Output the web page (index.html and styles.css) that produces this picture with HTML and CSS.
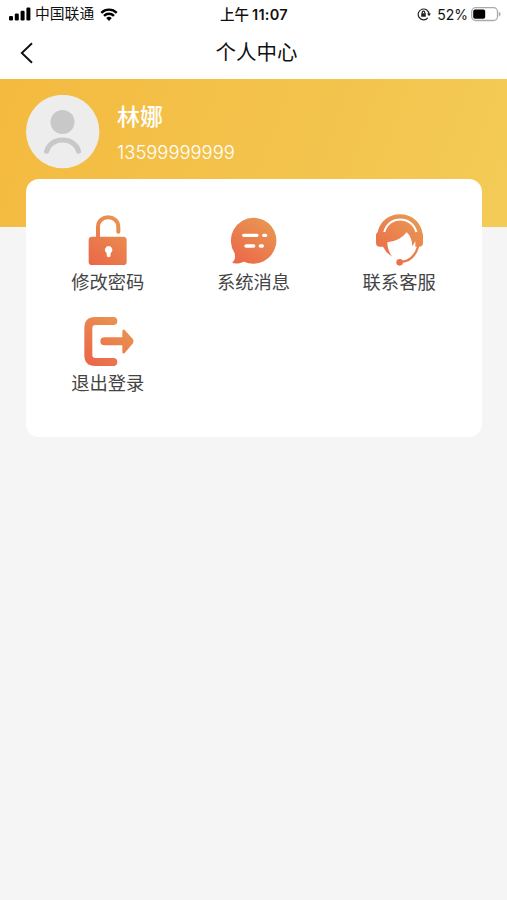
FILE: index.html
```html
<!DOCTYPE html>
<html lang="zh-CN">
<head>
<meta charset="utf-8">
<title>个人中心</title>
<link rel="stylesheet" href="styles.css">
</head>
<body>
<svg class="defs" aria-hidden="true">
  <defs>
    <linearGradient id="warm" gradientUnits="userSpaceOnUse" x1="200" y1="35" x2="90" y2="185">
      <stop offset="0" stop-color="#e99a52"/>
      <stop offset="1" stop-color="#eb6549"/>
    </linearGradient>
  </defs>
</svg>
<div class="status">
  <div class="status-left">
    <svg class="signal" viewBox="0 0 22 14"><rect x="0" y="9" width="4" height="4.5" rx="1.2"/><rect x="5.8" y="6.5" width="4" height="7" rx="1.2"/><rect x="11.6" y="3.8" width="4" height="9.7" rx="1.2"/><rect x="17.4" y="0.5" width="4" height="13" rx="1.2"/></svg>
    <span class="carrier">中国联通</span>
    <svg class="wifi" viewBox="0 0 18 13"><path d="M1.3 4.8a11 11 0 0 1 15.4 0M4 7.8a7.2 7.2 0 0 1 10 0"/><path class="dot" d="M6.2 10a4 4 0 0 1 5.6 0L9 12.9z"/></svg>
  </div>
  <div class="clock"><span class="period">上午</span><span class="time">11:07</span></div>
  <div class="status-right">
    <svg class="lock-rotation" viewBox="0 0 14 14"><path d="M10.8 10.8A5.4 5.4 0 1 1 12 7.4"/><path class="solid" d="M10 6.5h4l-2 2.8zM4.2 6.3h4.6v3.5H4.2z"/><path d="M5.2 6.5V5.4a1.3 1.3 0 0 1 2.6 0v1.1"/></svg>
    <span class="percent">52%</span>
    <svg class="battery" viewBox="0 0 30 15"><rect class="shell" x="0.7" y="0.7" width="25.8" height="12.8" rx="4"/><rect x="2.2" y="2.6" width="12" height="9.2" rx="1.8"/><path class="cap" d="M27.8 4.8c2.4.8 2.4 3.8 0 4.6z"/></svg>
  </div>
</div>
<header class="nav">
  <svg class="back" viewBox="0 0 14 22"><path d="M12 1.2 1.8 11 12 20.8"/></svg>
  <h1 class="title">个人中心</h1>
</header>
<main>
  <section class="banner">
    <svg class="avatar" viewBox="0 0 74 74"><circle class="disc" cx="36.7" cy="36.5" r="36.7"/><circle class="head" cx="36.5" cy="27" r="12"/><path class="shoulders" d="M20.6 56.3C24.5 41.3 48.8 41.3 52.6 56.3"/></svg>
    <div class="identity">
      <div class="name">林娜</div>
      <div class="phone">13599999999</div>
    </div>
  </section>
  <section class="card">
    <a class="item">
      <svg class="icon" viewBox="61 24 162 162"><path class="stroke" stroke-width="12" d="M112 100V66C112 27 173 27 173 66V80"/><rect class="fill" x="84" y="95" width="114" height="85" rx="10"/><path class="hole" d="M144 123a11.5 11.5 0 0 1 6 21v7a6 6 0 0 1-12 0v-7a11.5 11.5 0 0 1 6-21z"/></svg>
      <span class="label">修改密码</span>
    </a>
    <a class="item">
      <svg class="icon" viewBox="64 24 162 162"><path class="fill" d="M147 38a69 69 0 1 1-29 132c-12 5-21 6-31 5-4-1-4-4-1-6 5-5 6-11 4-24A69 69 0 0 1 147 38z"/><path class="line" d="M117 91h40M177 91h6M124 123h23M167 123h6"/></svg>
      <span class="label">系统消息</span>
    </a>
    <a class="item">
      <svg class="icon" viewBox="64 24 162 162"><path class="fill" d="M80 88C90 8 206 8 216 88L200 80H97z"/><path class="fill" d="M99 80H88Q76 80 76 91v22q0 12 12 12h9q8 17 27 30-14-20-14-43 37-3 58-30 16 14 17 42 6-9 9-16v17h11q12 0 12-12V91q0-11-12-11h-10C186 34 112 34 99 80z"/><path class="halo" d="M101 81C113 31 184 31 197 81"/><path class="stroke" stroke-width="7" d="M203 123C195 150 179 169 150 171"/><circle class="fill" cx="147" cy="172" r="10"/></svg>
      <span class="label">联系客服</span>
    </a>
    <a class="item">
      <svg class="icon" viewBox="62 27 162 162"><path class="stroke" stroke-width="24" d="M159 48H105Q84 48 84 69V150Q84 171 105 171H159"/><path class="fill" d="M132 97h54V80q0-9 7-5l25 28q4 6 0 12l-25 29q-7 5-7-5v-18h-54a12 12 0 0 1 0-24z"/></svg>
      <span class="label">退出登录</span>
    </a>
  </section>
</main>
</body>
</html>
```
FILE: styles.css
```css
* { box-sizing: border-box; }
body {
  margin: 0;
  min-height: 900px;
  background: #f5f5f5;
  color: #111;
  font-family: Inter, "Noto Sans CJK SC", sans-serif;
}
svg { display: block; flex: none; }
.defs { position: absolute; width: 0; height: 0; }
.status {
  display: grid;
  grid-template-columns: 1fr auto 1fr;
  align-items: center;
  height: 27px;
  padding: 0 6px 0 7px;
  background: #fff;
  font-size: 14px;
  line-height: 27px;
}
.status-left, .status-right, .clock { display: flex; align-items: center; }
.status-left { padding-left: 2px; }
.status-right { justify-content: flex-end; }
.signal { width: 22px; height: 14px; }
.carrier { margin-left: 4px; padding-top: 1px; font-size: 14.8px; }
.wifi { width: 18px; height: 13px; margin-left: 6px; }
.wifi path { fill: none; stroke: #000; stroke-width: 2.4; }
.wifi .dot { fill: #000; stroke: none; }
.clock { gap: 3px; font-size: 14.5px; font-weight: 600; }
.time { letter-spacing: 0.3px; }
.period { font-weight: 500; }
.lock-rotation { width: 14px; height: 14px; }
.lock-rotation path { fill: none; stroke: #222; stroke-width: 1.2; }
.lock-rotation .solid { fill: #222; stroke: none; }
.percent { margin: 0 3px 0 6px; }
.battery { width: 30px; height: 15px; }
.battery .shell { fill: none; stroke: #aaa; stroke-width: 1.3; }
.battery .cap { fill: #aaa; }
.nav {
  display: grid;
  grid-template-columns: 43px 1fr 37px;
  align-items: center;
  height: 52px;
  background: #fff;
}
.back { width: 14px; height: 22px; margin-left: 20px; }
.back path { fill: none; stroke: #111; stroke-width: 1.9; }
.title {
  margin: 0;
  text-align: center;
  font-size: 20.5px;
  font-weight: 400;
  line-height: 52px;
}
.banner {
  display: flex;
  align-items: flex-start;
  height: 148px;
  padding: 15.5px 25.5px;
  background: linear-gradient(110deg, #f4ba3f, #f3cb56);
  color: #fff;
}
.avatar { width: 74px; height: 74px; }
.disc { fill: #ededed; }
.head { fill: #c8c8c8; }
.shoulders { fill: none; stroke: #c8c8c8; stroke-width: 5; stroke-linecap: round; }
.identity { margin-left: 17.5px; padding-top: 5px; }
.name { font-size: 23px; font-weight: 500; line-height: 34px; }
.phone {
  margin-top: 6px;
  font-size: 18.4px;
  font-weight: 300;
  line-height: 24px;
}
.card {
  display: grid;
  grid-template-columns: repeat(3, 1fr);
  grid-auto-rows: 101px;
  align-content: start;
  height: 258px;
  margin: -48px 25px 0 26px;
  padding: 34px 10px 0 9px;
  background: #fff;
  border-radius: 13px;
}
.item { display: flex; flex-direction: column; align-items: center; }
.icon { width: 54px; height: 54px; }
.fill { fill: url(#warm); }
.stroke { fill: none; stroke: url(#warm); stroke-linecap: round; }
.hole { fill: #fff; }
.line { stroke: #fff; stroke-width: 10; stroke-linecap: round; }
.halo { fill: none; stroke: #fff; stroke-width: 6; }
.label { margin-top: 2px; font-size: 18.3px; line-height: 26px; color: #444; }
```
